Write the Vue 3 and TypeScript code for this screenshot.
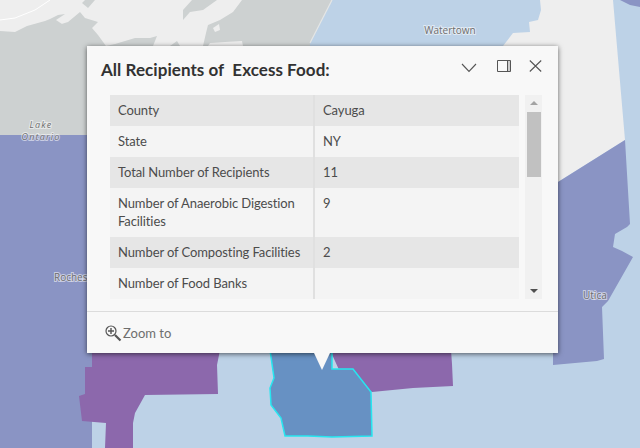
<script setup lang="ts">
interface Row { label: string; value: string }
const rows: Row[] = [
  { label: 'County', value: 'Cayuga' },
  { label: 'State', value: 'NY' },
  { label: 'Total Number of Recipients', value: '11' },
  { label: 'Number of Anaerobic Digestion Facilities', value: '9' },
  { label: 'Number of Composting Facilities', value: '2' },
  { label: 'Number of Food Banks', value: '' },
]
</script>

<template>
  <div class="view">
    <svg class="map" width="640" height="448" viewBox="0 0 640 448">
      <rect width="640" height="448" fill="#bdd2e7" />
      <path d="M0 0H332L308 46V140H0Z" fill="#eeeeee" />
      <path d="M0 31L15 32L27 26L45 21L50 19L58 15L65 14L56 20L62 24L55 26L68 22L80 12L85 18L98 22L92 28L98 35L106 46L115 44L135 38L150 38L157 36L153 46L170 46L177 41L180 46L203 46L206 33L208 25L220 20L233 12L242 0H332L310 43L306 140H0Z" fill="#cdd1d1" />
      <path d="M183 20L183 10L192 0H217L203 10L190 12Z" fill="#cdd1d1" />
      <path d="M82 3L88 8L95 0H85Z" fill="#cdd1d1" />
      <path d="M213 28L219 24L220 30L215 32Z" fill="#eeeeee" />
      <path d="M208 46L210 43L225 42L242 41L243 46Z" fill="#eeeeee" />
      <path d="M0 20L15 18L35 10L50 0" fill="none" stroke="#fff" stroke-width="1" />
      <path d="M332 0L310 43" fill="none" stroke="#e4e6e6" stroke-width="1.2" />
      <path d="M540 0L541 10L538 20L529 22L530 32L513 33L503 46L558 60V182L625 140L613 0Z" fill="#eeeeee" />
      <path d="M620 0H640V7L630 5Z" fill="#8a94c4" />
      <path d="M0 135H90V353H92V448H105L0 448Z" fill="#8a94c4" />
      <path d="M92 350V367H85V394L79 396L82 421L106 423L105 448H133L133 423L135 413L145 395L218 394L217 365L220 350Z" fill="#8c68ac" />
      <path d="M330 350H451L452 364L453 386L413 388L372 392L340 372Z" fill="#8c68ac" />
      <path d="M550 182L558 182L625 140L630 224L627 227L615 234L613 247L622 251L633 257L608 301L602 307L604 359L597 361L553 365V350Z" fill="#8a94c4" />
      <path d="M270 350L274 378L270 388L271 405L281 418L285 436L308 436L332 437L372 436L371 392L353 369H332V350Z" fill="#6791c3" stroke="#26e6f0" stroke-width="1.5" />
      <text class="lbl it" x="41" y="128" text-anchor="middle">Lake</text>
      <text class="lbl it" x="41" y="140" text-anchor="middle">Ontario</text>
      <text class="lbl" x="450" y="34" text-anchor="middle">Watertown</text>
      <text class="lbl" x="54" y="281">Rochester</text>
      <text class="lbl" x="583" y="299">Utica</text>
    </svg>

    <div class="popup">
      <header class="head">
        <h2 class="title">All Recipients of&nbsp; Excess Food:</h2>
        <div class="actions">
          <svg class="chev" width="16" height="10" viewBox="0 0 16 10"><path d="M1 1L8 8.5L15 1" fill="none" stroke="#555" stroke-width="1.1" /></svg>
          <svg width="14" height="12" viewBox="0 0 14 12"><rect x="11" y="1" width="2" height="10" fill="#ccc" /><path d="M.5.5H13.5V11.5H.5ZM10.5.5V11.5" fill="none" stroke="#555" stroke-width="1" /></svg>
          <svg width="13" height="12" viewBox="0 0 13 12"><path d="M.8.5L12.2 11.5M12.2.5L.8 11.5" fill="none" stroke="#555" stroke-width="1.1" /></svg>
        </div>
      </header>
      <div class="body">
        <div class="table">
          <div v-for="r in rows" :key="r.label" class="row">
            <div class="cell name">{{ r.label }}</div>
            <div class="cell val">{{ r.value }}</div>
          </div>
        </div>
        <div class="scroll">
          <span class="arrow up"></span>
          <span class="thumb"></span>
          <span class="arrow down"></span>
        </div>
      </div>
      <footer class="foot">
        <svg class="zoom" width="17" height="17" viewBox="0 0 17 17">
          <circle cx="6" cy="6" r="5" fill="none" stroke="#555" stroke-width="1.2" />
          <path d="M6 3V9M3 6H9" stroke="#555" stroke-width="1.4" />
          <path d="M10 10L15.5 15.5" stroke="#555" stroke-width="2.2" />
        </svg>
        <span>Zoom to</span>
      </footer>
      <span class="tip"></span>
    </div>
  </div>
</template>

<style>
html, body { margin: 0; }
</style>

<style scoped>
.view {
  position: relative;
  width: 640px;
  height: 448px;
  overflow: hidden;
  font-family: Lato, "Open Sans", sans-serif;
}
.map { position: absolute; inset: 0; display: block; }
.lbl {
  font-family: "Open Sans", sans-serif;
  font-size: 10px;
  fill: #6e6e6e;
  paint-order: stroke;
  stroke: rgba(255, 255, 255, 0.55);
  stroke-width: 2px;
}
.it { font-size: 9px; font-style: italic; letter-spacing: 1.2px; }
.popup {
  position: absolute;
  left: 87px;
  top: 46px;
  width: 471px;
  height: 307px;
  box-sizing: border-box;
  background: #f8f8f8;
  box-shadow: 0 1px 5px rgba(0, 0, 0, 0.6);
  display: flex;
  flex-direction: column;
}
.head {
  height: 49px;
  flex: none;
  box-sizing: border-box;
  padding: 14px 16px 0 14px;
  display: flex;
  align-items: flex-start;
  justify-content: space-between;
}
.title {
  margin: -1px 0 0;
  font-size: 17px;
  letter-spacing: 0.05px;
  line-height: 21px;
  font-weight: 700;
  color: #323232;
}
.actions { display: flex; align-items: flex-start; gap: 18px; }
.chev { margin-top: 3px; margin-right: 2px; }
.body {
  display: flex;
  gap: 6px;
  padding: 0 16px 0 23px;
  height: 204px;
  flex: none;
}
.table { width: 409px; overflow: hidden; background: #f4f4f4; }
.row { display: flex; }
.row:nth-child(odd) .cell { background: #e6e6e6; }
.cell {
  box-sizing: border-box;
  padding: 5.5px 8px 7.5px;
  font-size: 13px;
  letter-spacing: -0.1px;
  line-height: 18px;
  color: #4c4c4c;
  min-height: 31px;
}
.name { width: 203px; }
.val { flex: 1; border-left: 2px solid #e0e0e0; }
.scroll {
  width: 17px;
  background: #f1f1f1;
  display: flex;
  flex-direction: column;
  align-items: center;
}
.arrow { width: 0; height: 0; border-left: 4px solid transparent; border-right: 4px solid transparent; }
.up { margin-top: 6px; border-bottom: 4px solid #a3a3a3; }
.thumb { width: 14px; height: 65px; margin-top: 7px; background: #c1c1c1; }
.down { margin-top: auto; margin-bottom: 6px; border-top: 4px solid #505050; }
.foot {
  margin-top: 12px;
  border-top: 1px solid #dcdcdc;
  flex: 1;
  display: flex;
  align-items: center;
  gap: 1px;
  padding-left: 18px;
  font-size: 13px;
  color: #6e6e6e;
}
.zoom { margin-top: 2px; }
.tip {
  position: absolute;
  left: 227px;
  top: 307px;
  width: 0;
  height: 0;
  border-left: 8px solid transparent;
  border-right: 8px solid transparent;
  border-top: 17px solid #f8f8f8;
}
</style>
